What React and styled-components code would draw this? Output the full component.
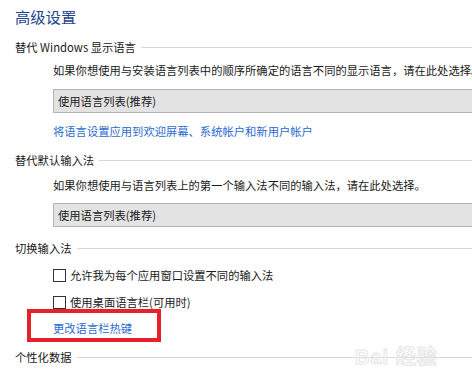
import React from 'react';
import styled, { createGlobalStyle } from 'styled-components';

const GlobalStyle = createGlobalStyle`
  html, body {
    margin: 0;
    padding: 0;
    background: #ffffff;
    overflow: hidden;
  }
  body {
    font-family: "Noto Sans CJK SC", "Noto Sans", "Liberation Sans", sans-serif;
    color: #1a1a1a;
  }
`;

const Page = styled.main`
  position: relative;
  width: 560px;
  height: 369px;
  padding-left: 15px;
  box-sizing: border-box;
  overflow: hidden;
`;

const Title = styled.h1`
  margin: 0;
  height: 32px;
  line-height: 32px;
  font-size: 15.3px;
  font-weight: 400;
  color: #23448c;
`;

const SectionHead = styled.div`
  display: flex;
  align-items: center;
  height: 30px;
  margin-top: ${p => p.$gap || 0}px;
  font-size: 11.3px;
  color: #1a1a1a;

  &::after {
    content: "";
    flex: 1;
    height: 1px;
    margin-left: 5px;
    background: #d9d9d9;
  }
`;

const Indent = styled.section`
  display: flex;
  flex-direction: column;
  align-items: flex-start;
  padding-left: 38px;
`;

const Desc = styled.p`
  margin: ${p => p.$gap || 0}px 0 0;
  height: 16px;
  line-height: 16px;
  font-size: 11.3px;
  white-space: nowrap;
`;

const Select = styled.div`
  align-self: stretch;
  height: 24px;
  margin-top: ${p => p.$gap || 0}px;
  box-sizing: border-box;
  border: 1px solid #b3b3b3;
  background: #e3e3e3;
  padding-left: 4px;
  line-height: 22px;
  font-size: 11.3px;
  color: #1a1a1a;
`;

const Link = styled.a`
  position: relative;
  display: block;
  margin-top: ${p => p.$gap || 0}px;
  height: 16px;
  line-height: 16px;
  font-size: 11.3px;
  color: #2b6bd1;
  text-decoration: none;
  white-space: nowrap;
`;

const Highlight = styled.span`
  position: absolute;
  left: -26px;
  top: -11px;
  width: 134px;
  height: 33px;
  box-sizing: border-box;
  border: 4px solid #e8202a;
  pointer-events: none;
`;

const CheckRow = styled.label`
  display: flex;
  align-items: center;
  gap: 4px;
  height: 16px;
  margin-top: ${p => p.$gap || 0}px;
  font-size: 11.3px;
  white-space: nowrap;
`;

const Box = styled.span`
  width: 13px;
  height: 13px;
  box-sizing: border-box;
  border: 1px solid #333333;
  background: #ffffff;
`;

const Watermark = styled.div`
  position: absolute;
  left: 355px;
  bottom: 1px;
  font-family: "Liberation Sans", "Noto Sans CJK SC", sans-serif;
  font-size: 20px;
  line-height: 22px;
  font-weight: 700;
  color: transparent;
  -webkit-text-stroke: 1px #e6e6e6;
  letter-spacing: 1px;
`;

export default function App() {
  return (
    <>
      <GlobalStyle />
      <Page>
        <Title>高级设置</Title>

        <SectionHead>替代 Windows 显示语言</SectionHead>
        <Indent>
          <Desc>如果你想使用与安装语言列表中的顺序所确定的语言不同的显示语言，请在此处选择。</Desc>
          <Select $gap={11}>使用语言列表(推荐)</Select>
          <Link $gap={10}>将语言设置应用到欢迎屏幕、系统帐户和新用户帐户</Link>
        </Indent>

        <SectionHead $gap={6}>替代默认输入法</SectionHead>
        <Indent>
          <Desc $gap={2}>如果你想使用与语言列表上的第一个输入法不同的输入法，请在此处选择。</Desc>
          <Select $gap={10}>使用语言列表(推荐)</Select>
        </Indent>

        <SectionHead $gap={6}>切换输入法</SectionHead>
        <Indent>
          <CheckRow $gap={4}><Box />允许我为每个应用窗口设置不同的输入法</CheckRow>
          <CheckRow $gap={11}><Box />使用桌面语言栏(可用时)</CheckRow>
          <Link $gap={10}>
            更改语言栏热键
            <Highlight />
          </Link>
        </Indent>

        <SectionHead $gap={6}>个性化数据</SectionHead>
        <Watermark>Bai 经验</Watermark>
      </Page>
    </>
  );
}
